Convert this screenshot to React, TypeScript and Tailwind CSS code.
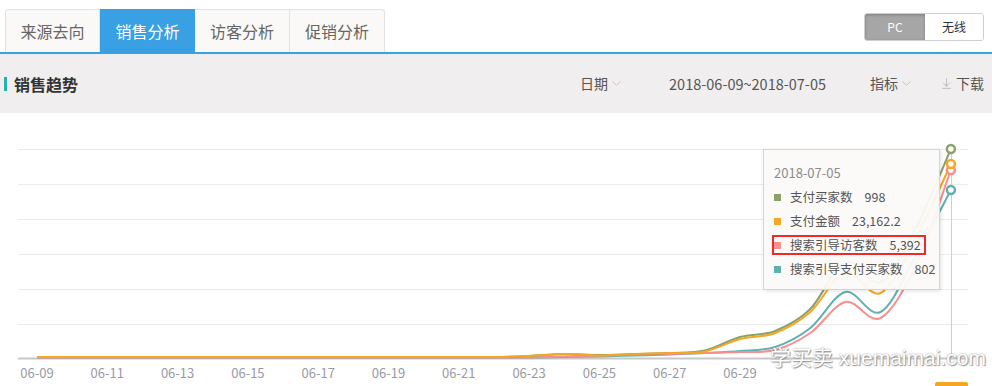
import { ChevronDown, ArrowDownToLine } from "lucide-react";

const tabs = ["来源去向", "销售分析", "访客分析", "促销分析"];
const axisDays = ["06-09", "06-11", "06-13", "06-15", "06-17", "06-19", "06-21", "06-23", "06-25", "06-27", "06-29"];

const flat = (n: number, v: number) => Array(n).fill(v);

// pixel y per day, 06-09 .. 07-05
const series = [
  { name: "搜索引导支付买家数", value: "802", color: "#5fb1b0", ys: [...flat(15, 357.5), 357, 356.5, 355.5, 354.5, 353, 351, 347, 328, 292, 312, 256, 190] },
  { name: "搜索引导访客数", value: "5,392", color: "#f88f8f", ys: [...flat(15, 357.5), 356.5, 355.5, 354.5, 354, 353, 352, 350, 333, 302, 318, 265, 170] },
  { name: "支付买家数", value: "998", color: "#8ba06b", ys: [...flat(14, 357), 356, 354, 355, 354, 353, 350.5, 337, 331, 309, 262, 282, 228, 149] },
  { name: "支付金额", value: "23,162.2", color: "#f5a623", ys: [...flat(14, 357), 356, 354, 355.5, 354, 353, 351.5, 339, 333, 312, 272, 293, 238, 164] },
];

const legend = [series[2], series[3], series[1], series[0]];

const dayX = (i: number) => 37 + i * 35.15;

function smoothPath(ys: number[]) {
  const pts = ys.map((y, i) => [dayX(i), y]);
  let d = `M${pts[0][0]},${pts[0][1]}`;
  for (let i = 0; i < pts.length - 1; i++) {
    const p0 = pts[i - 1] || pts[i];
    const p1 = pts[i];
    const p2 = pts[i + 1];
    const p3 = pts[i + 2] || p2;
    const c1x = p1[0] + (p2[0] - p0[0]) / 6;
    const c1y = p1[1] + (p2[1] - p0[1]) / 6;
    const c2x = p2[0] - (p3[0] - p1[0]) / 6;
    const c2y = p2[1] - (p3[1] - p1[1]) / 6;
    d += ` C${c1x},${c1y} ${c2x},${c2y} ${p2[0]},${p2[1]}`;
  }
  return d;
}

const gridYs = [149, 184, 219, 254, 289, 324];

export default function App() {
  return (
    <div className="relative w-[992px] h-[386px] overflow-hidden bg-white font-['Noto_Sans_CJK_SC','Liberation_Sans',sans-serif]">
      {/* tabs */}
      <div className="flex h-[54px] items-end justify-between border-b-2 border-[#38a0e3] pl-[5px] pr-[8px]">
        <div className="flex h-[43px]">
          {tabs.map((t, i) => (
            <div
              key={t}
              className={
                i === 1
                  ? "flex w-[95px] items-center justify-center bg-[#38a0e3] text-[16px] text-white"
                  : `flex w-[95px] items-center justify-center border-t border-r border-[#e2e2e2] bg-[#faf9f8] text-[16px] text-[#666] ${i === 0 ? "rounded-tl-[4px] border-l" : ""} ${i === 3 ? "rounded-tr-[4px]" : ""}`
              }
            >
              {t}
            </div>
          ))}
        </div>
        <div className="mb-[11px] flex h-[28px] self-end overflow-hidden rounded-[3px] border border-[#cfcfcf] text-[12px]">
          <div className="flex w-[60px] items-center justify-center bg-[#a6a6a6] text-white shadow-[inset_0_1px_3px_rgba(0,0,0,0.25)]">PC</div>
          <div className="flex w-[58px] items-center justify-center bg-white text-[#333]">无线</div>
        </div>
      </div>

      {/* section header */}
      <div className="flex h-[59px] items-center bg-[#f0eeee] pr-[8px]">
        <div className="ml-[4px] h-[14px] w-[3px] bg-[#1fb5b5]" />
        <div className="ml-[7px] text-[16px] font-bold text-[#333]">销售趋势</div>
        <div className="ml-auto flex items-center text-[14px] text-[#555]">
          <span>日期</span>
          <ChevronDown className="ml-[1px] h-[15px] w-[15px] text-[#bbb]" strokeWidth={1.2} />
          <span className="ml-[45px] text-[14.5px]">2018-06-09~2018-07-05</span>
          <span className="ml-[44px]">指标</span>
          <ChevronDown className="ml-[1px] h-[15px] w-[15px] text-[#bbb]" strokeWidth={1.2} />
          <ArrowDownToLine className="ml-[26px] h-[13px] w-[13px] text-[#aaa]" strokeWidth={1.3} />
          <span className="ml-[3px]">下载</span>
        </div>
      </div>

      {/* chart */}
      <div className="relative h-[273px]">
        <svg width="992" height="273" viewBox="0 113 992 273" className="block">
          {gridYs.map((y) => (
            <line key={y} x1="18" x2="968" y1={y + 0.5} y2={y + 0.5} stroke="#ebebeb" strokeWidth="1" />
          ))}
          <line x1="18" x2="968" y1="358.5" y2="358.5" stroke="#c8c8c8" strokeWidth="2" />
          <line x1="951.5" x2="951.5" y1="149" y2="358" stroke="#cfcfcf" strokeWidth="1" />
          {series.map((s) => (
            <path key={s.name} d={smoothPath(s.ys)} fill="none" stroke={s.color} strokeWidth="2" />
          ))}
          {series.map((s) => (
            <circle key={s.name} cx={dayX(26)} cy={s.ys[26]} r="4" fill="white" stroke={s.color} strokeWidth="2.5" />
          ))}
          {axisDays.map((d, i) => (
            <text key={d} x={37 + i * 70.3} y="378" textAnchor="middle" fontSize="13" fill="#9a9aa6">
              {d}
            </text>
          ))}
        </svg>

        {/* tooltip */}
        <div className="absolute left-[763px] top-[36px] h-[141px] w-[177px] border border-[#d6d4d0] bg-[#fbfaf8]/95 pl-[10px] pt-[12px] text-[#555] shadow-[1px_1px_4px_rgba(0,0,0,0.12)]">
          <div className="text-[13px] leading-[22px] text-[#8c8c8c]">2018-07-05</div>
          {legend.map((s, i) => (
            <div key={s.name} className={`relative flex h-[24px] items-center text-[12.5px] ${i === 0 ? "mt-[1px]" : ""}`}>
              <span className="h-[7px] w-[7px] shrink-0" style={{ backgroundColor: s.color }} />
              <span className="ml-[9px] whitespace-nowrap">{s.name}</span>
              <span className="ml-[12px] whitespace-nowrap">{s.value}</span>
              {i === 2 && <div className="absolute left-[-2px] top-[2px] h-[20px] w-[154px] border-2 border-[#ec2b2b]" />}
            </div>
          ))}
        </div>

        {/* watermark */}
        <div className="absolute left-[770px] top-[230px] whitespace-nowrap font-['Liberation_Sans','Noto_Sans_CJK_SC',sans-serif] text-[21px] leading-[30px] text-white [text-shadow:0_0_2px_#8a8a8a,1px_1px_1px_#9a9a9a]">
          学买卖 xuemaimai.com
        </div>
        <div className="absolute bottom-0 left-[935px] h-[4px] w-[33px] rounded-t-[2px] bg-[#f5a623]" />
      </div>
    </div>
  );
}
